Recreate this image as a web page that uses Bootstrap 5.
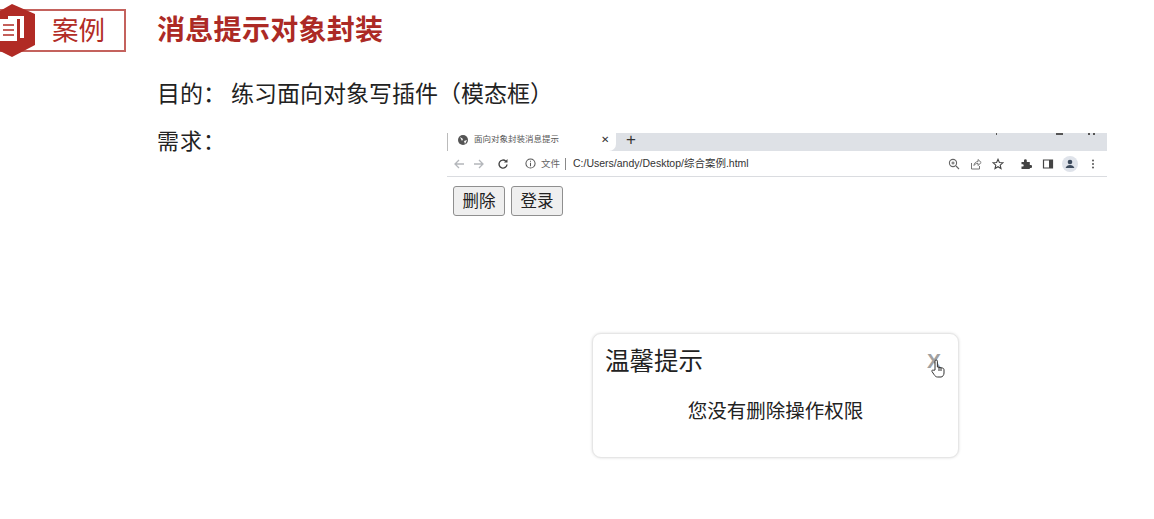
<!DOCTYPE html>
<html lang="zh-CN">
<head>
<meta charset="utf-8">
<title>消息提示对象封装</title>
<link href="https://cdn.jsdelivr.net/npm/bootstrap@5.3.0/dist/css/bootstrap.min.css" rel="stylesheet">
<style>
html,body{height:100%;background:#fff;overflow:hidden}
body{font-family:"Liberation Sans","Noto Sans CJK SC",sans-serif;color:#222}
.slide{height:519px;width:1154px;position:relative}
.head-row{padding-top:9px;height:66px}
.case-tag{width:126px;height:43px;border:2px solid #c4625d;border-left:0;color:#b22c26;font-size:26.5px;line-height:40px;padding-left:52px;position:relative;flex:none}
.hexa{position:absolute;left:0;top:-7px;width:36px;height:53px}
.slide-title{margin:0 0 0 31px;font-size:28px;line-height:44px;font-weight:700;color:#ac2a25;letter-spacing:.3px}
.body-area{margin-left:157px}
.line-goal{font-size:23px;line-height:32px;margin-top:12px;color:#222}
.line-goal span{margin-right:5px}
.need-wrap{margin-top:23px}
.need-label{font-size:22px;line-height:32px;width:290px;letter-spacing:1px;margin-top:-7px}
.shot{width:660px;height:300px}
.tabstrip{height:18px;background:#dee1e6;font-size:9px;color:#444;position:relative}
.win-bit{position:absolute;top:0;height:2px;background:#555}
.tab-active{width:169px;height:18px;background:#fff;border-left:1px solid #bbb;border-bottom-right-radius:7px;padding:0 7px 5px 10px}
.tab-title{font-size:8.5px;color:#555;margin-left:6px}
.tab-x{font-size:10px;color:#333;margin-left:auto}
.tab-plus{font-size:17px;line-height:18px;color:#333;margin:-5px 0 0 10px}
.toolbar{height:26px;border-bottom:1px solid #dadce0;padding:0 8px 0 6px;color:#5f6368}
.addr{font-size:10.5px;color:#333;margin-left:7px}
.file-lab{font-size:9.5px;color:#666;margin-left:5px;padding-right:5px;border-right:1px solid #888;line-height:12px}
.tool-ic{width:12px;height:12px;display:block;flex:none}
.page-btns{padding:9px 6px;gap:6px}
.demo-btn{font-size:16.5px;line-height:22px;height:30px;width:52px;padding:0;color:#222;background:#efefef;border:1px solid #8f8f8f;border-radius:3px}
.tip-box{position:absolute;left:592px;top:333px;width:367px;height:125px;background:#fff;border:1px solid #e6e6e6;border-radius:9px;box-shadow:0 0 3px #ddd}
.tip-title{font-size:24.5px;line-height:32px;padding:12px 0 0 12px;color:#222}
.tip-msg{font-size:19.5px;line-height:28px;text-align:center;margin-top:19px;color:#222}
.tip-close{position:absolute;left:334px;top:15px;font-size:21px;line-height:24px;font-weight:700;color:#a0a0a0}
.hand{position:absolute;left:338px;top:25px;width:14px;height:20px}
.m-10{margin-left:10px}.m-12{margin-left:12px}.m-16{margin-left:16px}
</style>
</head>
<body>
<div class="slide">
  <header class="head-row d-flex align-items-start">
    <div class="case-tag">案例
      <svg class="hexa" viewBox="0 0 36 53"><path d="M12 0 L35 10 L35 41 L12 53 L0 47 L0 7 Z" fill="#b12b25"/><path d="M0 15 H17 V37 H0 Z" fill="#fff"/><path d="M8 12 H24 V34 H20 V15 H8 Z" fill="#fff"/><path d="M3 21 H14 M3 26 H14 M3 31 H14" stroke="#b12b25" stroke-width="1.5"/></svg>
    </div>
    <h1 class="slide-title">消息提示对象封装</h1>
  </header>
  <main class="body-area">
    <p class="line-goal mb-0"><span>目的：</span>练习面向对象写插件（模态框）</p>
    <div class="need-wrap d-flex align-items-start">
      <div class="need-label">需求：</div>
      <section class="shot">
        <div class="tabstrip d-flex align-items-center">
          <div class="tab-active d-flex align-items-center">
            <svg class="tool-ic" style="width:10px;height:10px" viewBox="0 0 10 10"><circle cx="5" cy="5" r="5" fill="#555"/><path d="M2 2 L5 4 L4 6 Z M6 6 L9 5 L7 9 Z" fill="#fff"/></svg>
            <span class="tab-title">面向对象封装消息提示</span>
            <span class="tab-x">✕</span>
          </div>
          <span class="tab-plus">+</span>
          <i class="win-bit" style="left:549px;width:1px"></i>
          <i class="win-bit" style="left:609px;width:7px"></i>
          <i class="win-bit" style="left:641px;width:2px"></i>
          <i class="win-bit" style="left:646px;width:2px"></i>
        </div>
        <div class="toolbar d-flex align-items-center">
          <svg class="tool-ic" viewBox="0 0 12 12" fill="none" stroke="#b4b7bb" stroke-width="1.3"><path d="M11 6H2M6 2 2 6l4 4"/></svg>
          <svg class="tool-ic ms-2" viewBox="0 0 12 12" fill="none" stroke="#b4b7bb" stroke-width="1.3"><path d="M1 6h9M6 2l4 4-4 4"/></svg>
          <svg class="tool-ic m-12" viewBox="0 0 12 12" fill="none" stroke="#444" stroke-width="1.4"><path d="M10 6.500A4 4 0 1 1 8.800 3.200"/><path d="M10.500 1v3.500H7" fill="#444" stroke="none"/></svg>
          <svg class="tool-ic m-16" style="width:11px;height:11px" viewBox="0 0 12 12" fill="none" stroke="#555" stroke-width="1.1"><circle cx="6" cy="6" r="5"/><path d="M6 5.200V9M6 3v1.200"/></svg>
          <span class="file-lab">文件</span>
          <span class="addr">C:/Users/andy/Desktop/综合案例.html</span>
          <svg class="tool-ic ms-auto" viewBox="0 0 12 12" fill="none" stroke="#666" stroke-width="1.1"><circle cx="5" cy="5" r="3.600"/><path d="M8 8l3 3M3.400 5h3.200M5 3.400v3.200"/></svg>
          <svg class="tool-ic m-10" viewBox="0 0 12 12" fill="none" stroke="#777" stroke-width="1"><path d="M1.500 5v6h8V8M4 7.500C4 5 6 3.600 8 3.600V1.500l3.200 3L8 7.500V5.400C6 5.400 5 6 4 7.500Z"/></svg>
          <svg class="tool-ic m-10" viewBox="0 0 12 12" fill="none" stroke="#444" stroke-width="1.1"><path d="M6 1.300 7.400 4.500l3.500.3-2.700 2.300.8 3.400L6 8.700 3 10.500l.8-3.400L1.100 4.800l3.500-.3Z"/></svg>
          <svg class="tool-ic m-16" viewBox="0 0 12 12"><path d="M1.500 4H4V2.600a1.400 1.400 0 0 1 2.800 0V4h3v3h1a1.500 1.500 0 0 1 0 3h-1v1H1.500V8.600H3a1.400 1.400 0 0 0 0-2.400H1.500Z" fill="#444"/></svg>
          <svg class="tool-ic m-10" viewBox="0 0 12 12"><path d="M1.500 2h9v8h-9Z" fill="#fff" stroke="#444" stroke-width="1.2"/><path d="M7 2h3.500v8H7Z" fill="#444"/></svg>
          <svg class="tool-ic" style="margin-left:8px;width:16px;height:16px" viewBox="0 0 16 16"><circle cx="8" cy="8" r="8" fill="#dfe3ea"/><circle cx="8" cy="6" r="2.300" fill="#3c4a5c"/><path d="M3.600 12c.6-2 2.400-3 4.400-3s3.800 1 4.400 3Z" fill="#3c4a5c"/></svg>
          <svg class="tool-ic" style="margin-left:9px" viewBox="0 0 12 12" fill="#555"><circle cx="6" cy="2.500" r="1"/><circle cx="6" cy="6" r="1"/><circle cx="6" cy="9.500" r="1"/></svg>
        </div>
        <div class="page-btns d-flex">
          <button type="button" class="demo-btn">删除</button>
          <button type="button" class="demo-btn">登录</button>
        </div>
      </section>
    </div>
  </main>
  <aside class="tip-box">
    <div class="tip-title">温馨提示</div>
    <span class="tip-close">X</span>
    <svg class="hand" viewBox="0 0 14 20" fill="#fff" stroke="#333" stroke-width="1"><path d="M4 11V2.200a1.200 1.200 0 0 1 2.400 0V8l5 1c1.300.3 1.600 1 1.600 2v3c0 2-1.400 4-3 4H6.500C5 18 4 17 3 15.500L1 12.500c-.6-1 .8-2.200 1.800-1.200Z"/><path d="M8 8.500V12M10 9v3" fill="none"/></svg>
    <p class="tip-msg mb-0">您没有删除操作权限</p>
  </aside>
</div>
<script src="https://cdn.jsdelivr.net/npm/bootstrap@5.3.0/dist/js/bootstrap.bundle.min.js"></script>
</body>
</html>
